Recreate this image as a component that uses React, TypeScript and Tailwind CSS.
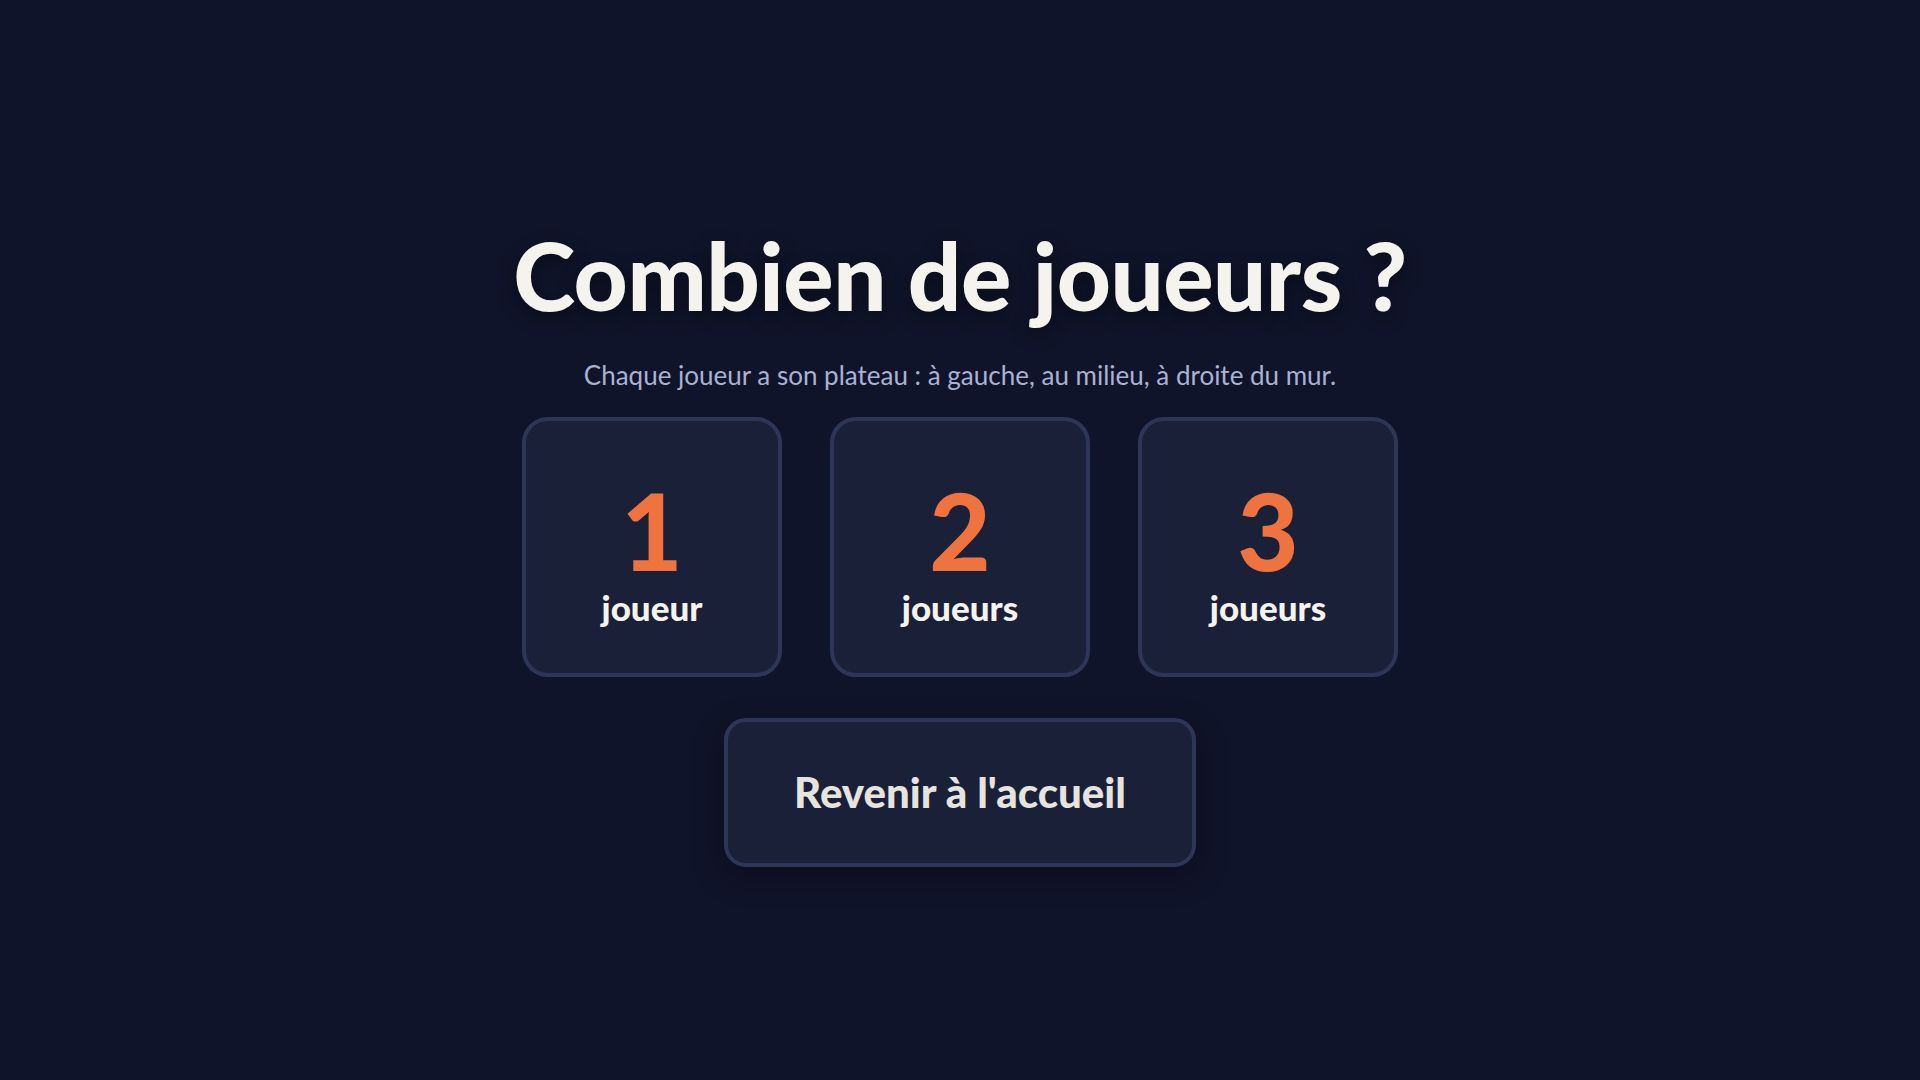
import React from "react";

const options = [
  { n: "1", label: "joueur" },
  { n: "2", label: "joueurs" },
  { n: "3", label: "joueurs" },
];

export default function App() {
  return (
    <div
      className="min-h-screen w-full bg-[#10142a] flex flex-col items-center justify-center pt-[14px]"
      style={{ fontFamily: "Lato, 'Noto Sans', sans-serif" }}
    >
      <h1 className="text-[94px] leading-none font-black text-[#f5f3ee] tracking-[-0.5px] [text-shadow:0_6px_18px_rgba(0,0,0,0.45)]">
        Combien de joueurs ?
      </h1>
      <p className="mt-[40px] text-[26px] leading-none text-[#a9b2d3]">
        Chaque joueur a son plateau : à gauche, au milieu, à droite du mur.
      </p>
      <div className="mt-[29px] flex gap-[48px]">
        {options.map((o) => (
          <button
            key={o.n}
            className="w-[260px] h-[260px] rounded-[26px] border-[4px] border-[#2d3656] bg-[#1b2039] flex flex-col items-center justify-center pt-[4px]"
          >
            <span className="text-[106px] leading-none font-black text-[#ef733f] mt-[4px]">{o.n}</span>
            <span className="mt-[7px] text-[35px] leading-none font-black text-[#f5f3ee]">{o.label}</span>
          </button>
        ))}
      </div>
      <button className="mt-[41px] w-[472px] h-[149px] rounded-[22px] border-[4px] border-[#2d3656] bg-[#1b2039] text-[42px] font-black text-[#e6e4de] shadow-[0_10px_30px_rgba(0,0,0,0.35)]">
        Revenir à l'accueil
      </button>
    </div>
  );
}
